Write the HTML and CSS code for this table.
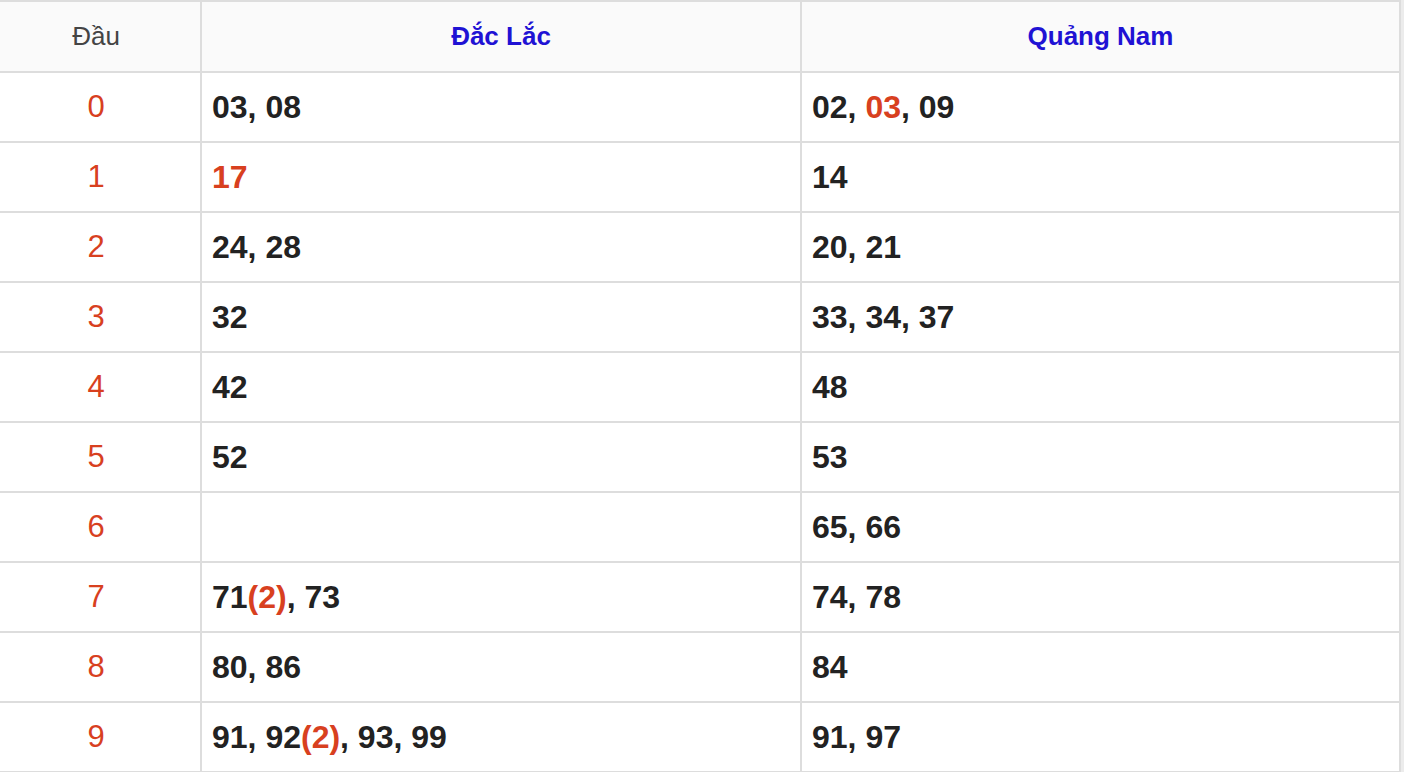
FILE: index.html
```html
<!DOCTYPE html>
<html lang="vi">
<head>
<meta charset="utf-8">
<title>Lô tô</title>
<link rel="stylesheet" href="styles.css">
</head>
<body>
<div class="page">
  <div class="loto">
    <div class="cell head first">Đầu</div>
    <div class="cell head prov">Đắc Lắc</div>
    <div class="cell head prov">Quảng Nam</div>

    <div class="cell first">0</div>
    <div class="cell nums"><span>03, 08</span></div>
    <div class="cell nums"><span>02, <span class="hl">03</span>, 09</span></div>

    <div class="cell first">1</div>
    <div class="cell nums"><span><span class="hl">17</span></span></div>
    <div class="cell nums"><span>14</span></div>

    <div class="cell first">2</div>
    <div class="cell nums"><span>24, 28</span></div>
    <div class="cell nums"><span>20, 21</span></div>

    <div class="cell first">3</div>
    <div class="cell nums"><span>32</span></div>
    <div class="cell nums"><span>33, 34, 37</span></div>

    <div class="cell first">4</div>
    <div class="cell nums"><span>42</span></div>
    <div class="cell nums"><span>48</span></div>

    <div class="cell first">5</div>
    <div class="cell nums"><span>52</span></div>
    <div class="cell nums"><span>53</span></div>

    <div class="cell first">6</div>
    <div class="cell nums"></div>
    <div class="cell nums"><span>65, 66</span></div>

    <div class="cell first">7</div>
    <div class="cell nums"><span>71<span class="hl">(2)</span>, 73</span></div>
    <div class="cell nums"><span>74, 78</span></div>

    <div class="cell first">8</div>
    <div class="cell nums"><span>80, 86</span></div>
    <div class="cell nums"><span>84</span></div>

    <div class="cell first">9</div>
    <div class="cell nums"><span>91, 92<span class="hl">(2)</span>, 93, 99</span></div>
    <div class="cell nums"><span>91, 97</span></div>
  </div>
</div>
</body>
</html>
```

FILE: styles.css
```css
html, body {
  margin: 0;
  padding: 0;
  background: #ececec;
  font-family: "Liberation Sans", Arial, sans-serif;
}

.page {
  width: 1401px;
}

.loto {
  display: grid;
  grid-template-columns: 200px 598px 597px;
  grid-template-rows: 69px repeat(10, 68px);
  column-gap: 2px;
  row-gap: 2px;
  padding: 2px 2px 2px 0;
  background: #dddddd;
}

.cell {
  background: #ffffff;
  display: flex;
  align-items: center;
}

.head {
  background: #fafafa;
  justify-content: center;
  font-size: 26px;
}

.head.first {
  color: #444444;
  font-weight: normal;
}

.prov {
  color: #1f12d4;
  font-weight: bold;
}

.first {
  justify-content: center;
  padding-right: 8px;
}

.cell.first:not(.head) {
  color: #d8401f;
  font-size: 31px;
}

.nums {
  padding-left: 10px;
  font-size: 32px;
  font-weight: bold;
  color: #222222;
}

.hl {
  color: #d8401f;
}
```
